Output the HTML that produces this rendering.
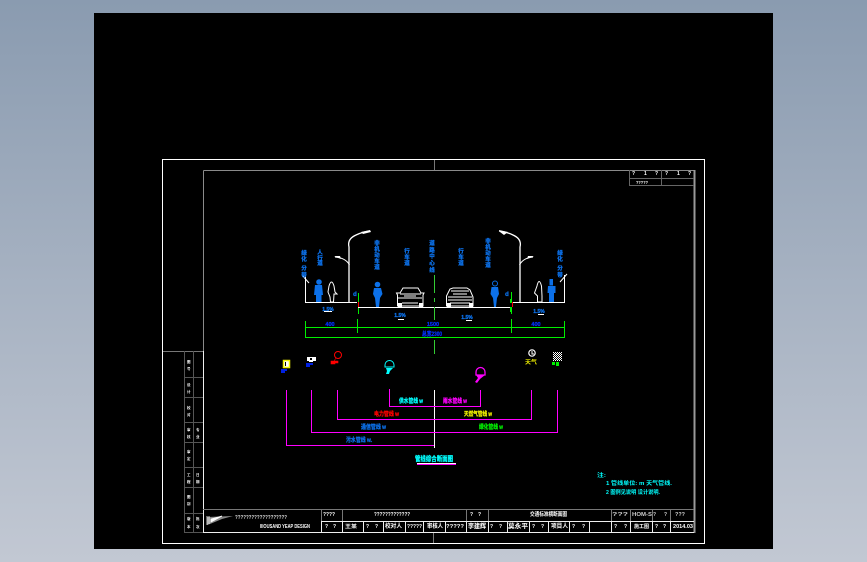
<!DOCTYPE html>
<html lang="zh"><head><meta charset="utf-8"><title>CAD</title>
<style>
html,body{margin:0;padding:0;width:867px;height:562px;overflow:hidden;background:linear-gradient(#8a9bb0,#c2c8d3)}
svg{position:absolute;left:0;top:0;display:block}
text{font-family:"Liberation Sans","Noto Sans CJK SC",sans-serif;font-weight:bold}
.b text,text.b{stroke:currentColor;stroke-width:.3}
</style></head><body>
<svg width="867" height="562" viewBox="0 0 867 562" xmlns="http://www.w3.org/2000/svg">
<rect x="94" y="13" width="679" height="536" fill="#000"/>

<!-- frames -->
<g fill="none" shape-rendering="crispEdges">
<rect x="162.5" y="159.5" width="542" height="384" stroke="#fff"/>
<path d="M203.5 170.5H694.5V509" stroke="#8a8a8a"/>
<path d="M694.5 170V533" stroke="#999" stroke-width="2"/>
<path d="M203.5 170.5V351" stroke="#8a8a8a"/>
<path d="M203.5 351V532.5H694" stroke="#eee"/>
<path d="M434.5 160V170M433.5 533V543M163 351.5H203" stroke="#777"/>
<!-- top right table -->
<path d="M629.5 170V185.5H694M661.5 170V185.5M629.5 178.5H694" stroke="#666"/>
<!-- left strip -->
<path d="M184.5 351V532.5M193.5 351V532.5M184 377.5H203M184 397.5H203M184 422.5H203M184 442.5H203M184 467.5H203M184 487.5H203M184 513.5H203M184 532.5H203" stroke="#555"/>
<!-- title block -->
<path d="M203 509.5H694M321.5 509V521M342.5 509V521M466.5 509V521M488.5 509V521M611.5 509V521M630.5 509V521M652.5 509V521M670.5 509V521" stroke="#777"/>
<path d="M321 521.500H694" stroke="#eee"/>
<path d="M321.500 521V532M342.500 521V532M363.500 521V532M383.500 521V532M405.500 521V532M423.500 521V532M445.500 521V532M466.500 521V532M488.500 521V532M507.500 521V532M529.500 521V532M548.500 521V532M569.500 521V532M589.500 521V532M611.500 521V532M630.500 521V532M652.500 521V532M670.500 521V532" stroke="#eee"/>
</g>

<!-- left strip text -->
<g fill="#fff" font-size="3.500">
<text x="187" y="363">图</text><text x="187" y="370">号</text>
<text x="187" y="386">设</text><text x="187" y="393">计</text>
<text x="187" y="409">校</text><text x="187" y="416">对</text>
<text x="187" y="431">审</text><text x="187" y="438">核</text><text x="196" y="431">专</text><text x="196" y="438">业</text>
<text x="187" y="453">审</text><text x="187" y="460">定</text>
<text x="187" y="476">工</text><text x="187" y="483">程</text><text x="196" y="476">日</text><text x="196" y="483">期</text>
<text x="187" y="498">图</text><text x="187" y="505">别</text>
<text x="187" y="520">版</text><text x="187" y="528">本</text><text x="196" y="520">批</text><text x="196" y="528">次</text>
</g>

<!-- top right table text -->
<g fill="#fff" font-size="5">
<text x="632" y="175">?</text><text x="644" y="175">1</text><text x="655" y="175">?</text><text x="665" y="175">?</text><text x="677" y="175">1</text><text x="688" y="175">?</text>
<text x="636" y="184" font-size="4.500" textLength="12" lengthAdjust="spacingAndGlyphs">?????</text>
</g>

<!-- title block text -->
<g fill="#fff" font-size="5">
<path d="M207 517L233 516L222 519L210 524L207 525Z" fill="#888"/>
<path d="M207 516V525M209 516V524M211 522L222 516L211 519Z" stroke="#fff" fill="#fff" stroke-width=".8"/>
<text x="235" y="519" font-size="5" fill="#ddd" textLength="52" lengthAdjust="spacingAndGlyphs">???????????????????</text>
<text x="260" y="528" font-size="5" textLength="50" lengthAdjust="spacingAndGlyphs">IIIOUSAND YEAP DESIGN</text>
<text x="323" y="516" font-size="5" textLength="12" lengthAdjust="spacingAndGlyphs">????</text>
<text x="374" y="516" font-size="5" textLength="36" lengthAdjust="spacingAndGlyphs">?????????????</text>
<text x="325" y="528">?</text><text x="333" y="528">?</text>
<text x="345" y="528" textLength="12" lengthAdjust="spacingAndGlyphs">王某</text>
<text x="366" y="528">?</text><text x="375" y="528">?</text>
<text x="385" y="528" font-size="6" textLength="17" lengthAdjust="spacingAndGlyphs">校对人</text>
<text x="407" y="528" textLength="15" lengthAdjust="spacingAndGlyphs">?????</text>
<text x="427" y="528" font-size="6" textLength="16" lengthAdjust="spacingAndGlyphs">审核人</text>
<text x="446" y="528" textLength="18" lengthAdjust="spacingAndGlyphs">?????</text>
<text x="468" y="528" font-size="6.500" textLength="18" lengthAdjust="spacingAndGlyphs">李建辉</text>
<text x="470" y="516">?</text><text x="478" y="516">?</text>
<text x="530" y="516" font-size="5.500" textLength="37" lengthAdjust="spacingAndGlyphs">交通标准横断面图</text>
<text x="490" y="528">?</text><text x="499" y="528">?</text>
<text x="508" y="528" font-size="6.500" textLength="20" lengthAdjust="spacingAndGlyphs">莫永平</text>
<text x="532" y="528">?</text><text x="541" y="528">?</text>
<text x="551" y="528" font-size="6" textLength="17" lengthAdjust="spacingAndGlyphs">项目人</text>
<text x="572" y="528">?</text><text x="582" y="528">?</text>
<text x="612" y="516" fill="#ccc" textLength="16" lengthAdjust="spacingAndGlyphs">???</text>
<text x="632" y="516" fill="#ccc" textLength="20" lengthAdjust="spacingAndGlyphs">HOM-S</text>
<text x="653" y="516" fill="#ccc">?</text><text x="664" y="516" fill="#ccc">?</text>
<text x="675" y="516" fill="#ccc" textLength="10" lengthAdjust="spacingAndGlyphs">???</text>
<text x="614" y="528">?</text><text x="624" y="528">?</text>
<text x="634" y="528" font-size="5" textLength="15" lengthAdjust="spacingAndGlyphs">施工图</text>
<text x="655" y="528">?</text><text x="663" y="528">?</text>
<text x="673" y="528" font-size="5.500" font-weight="normal" textLength="20" lengthAdjust="spacingAndGlyphs">2014.03</text>
</g>

<!-- road section -->
<g fill="none" stroke="#fff">
<path d="M305.500 275V302.500H357M358 307.500H512M512 302.500H564.500V275" stroke-width="1" shape-rendering="crispEdges"/>
<path d="M302 275L309 283M567 274L560 282" stroke-width="1"/>
<path d="M349 302V247Q347 239 356 235Q362 232 370 231" stroke-width="1.300"/>
<path d="M349.500 265Q346 258 335 257" stroke-width="1"/>
<path d="M520 302V247Q522 239 513 235Q507 232 499 231" stroke-width="1.300"/>
<path d="M519.500 265Q523 258 533 257" stroke-width="1"/>
</g>
<g fill="#fff">
<path d="M361 232L370 230L371 232L363 234Z"/><path d="M334 256L340 256L341 259Z"/>
<path d="M499 230L508 232L504 235L500 232Z"/><path d="M534 256L528 256L527 259Z"/>
</g>

<!-- cars -->
<g fill="none" stroke="#fff" stroke-width="1">
<path d="M396.500 293L400 293L403 288H418L421 293L424 293L423 295V306H397.500V295Z"/>
<path d="M400 294H421M398 298H422M402 303H418M404 296H416"/>
<path d="M446.500 296L450 289L453 288H467L470 290L473 297V306H446.500Z"/>
<path d="M451 291H469M448 297H472M448 300H472M450 303H470M453 294H467"/>
</g>
<path d="M398 303H402V307H398ZM419 303H423V307H419ZM447 303H451V307H447ZM469 303H473V307H469Z" fill="#fff"/>

<!-- pedestrians -->
<g fill="#0c70e8">
<circle cx="319" cy="282" r="2.800"/><path d="M315 285H322L323 295H321.500V302H316V295H314Z"/>
<circle cx="377.500" cy="284.500" r="2.800"/><path d="M374 288H381L382.500 294L380 298L379 307H376L375 298L373 294Z"/>
<path d="M491.500 287H498L499 294L497 298L496 307H494L493 298L490.500 294Z"/>
<path d="M548 286H555.500V293H554V302H549V293H547.500Z"/><rect x="549.500" y="279" width="3.500" height="6.500"/>
</g>
<circle cx="495" cy="283.500" r="2.500" fill="none" stroke="#0c70e8"/>
<g fill="none" stroke="#fff">
<path d="M329 286Q331.500 278 334 286L335 292L337 294H334L333.500 302H330.500L330 297L328 292Z"/>
<path d="M537 286Q539 277 541.500 286L542 296V302H537.500V296L534.500 293Z"/>
</g>

<!-- vertical labels -->
<g fill="#0c70e8" color="#0c70e8" font-size="5.500" text-anchor="middle" class="b">
<text x="304"><tspan x="304" y="255">绿</tspan><tspan x="304" y="261">化</tspan><tspan x="304" y="270">分</tspan><tspan x="304" y="277">带</tspan></text>
<text x="320"><tspan x="320" y="254">人</tspan><tspan x="320" y="260">行</tspan><tspan x="320" y="265">道</tspan></text>
<text x="377"><tspan x="377" y="245">非</tspan><tspan x="377" y="251">机</tspan><tspan x="377" y="257">动</tspan><tspan x="377" y="263">车</tspan><tspan x="377" y="269">道</tspan></text>
<text x="407"><tspan x="407" y="253">行</tspan><tspan x="407" y="259">车</tspan><tspan x="407" y="265">道</tspan></text>
<text x="432"><tspan x="432" y="245">道</tspan><tspan x="432" y="252">路</tspan><tspan x="432" y="258">中</tspan><tspan x="432" y="265">心</tspan><tspan x="432" y="272">线</tspan></text>
<text x="461"><tspan x="461" y="253">行</tspan><tspan x="461" y="259">车</tspan><tspan x="461" y="265">道</tspan></text>
<text x="488"><tspan x="488" y="243">非</tspan><tspan x="488" y="249">机</tspan><tspan x="488" y="255">动</tspan><tspan x="488" y="261">车</tspan><tspan x="488" y="267">道</tspan></text>
<text x="560"><tspan x="560" y="255">绿</tspan><tspan x="560" y="261">化</tspan><tspan x="560" y="270">分</tspan><tspan x="560" y="277">带</tspan></text>
</g>

<!-- slope/dim labels -->
<g font-size="5" fill="#0c70e8" color="#0c70e8" text-anchor="middle" class="b">
<text x="328" y="311">1.5%</text><text x="400" y="317">1.5%</text><text x="467" y="319">1.5%</text><text x="539" y="313">1.5%</text>
<text x="355" y="296" font-size="6">d</text><text x="507" y="296" font-size="6">d</text>
</g>
<g font-size="5.500" fill="#0030f0" color="#0030f0" text-anchor="middle" class="b">
<text x="330" y="326">400</text>
<text x="433" y="326">1500</text>
<text x="536" y="326">400</text>
<text x="432" y="336" font-size="6" textLength="20" lengthAdjust="spacingAndGlyphs">总宽2300</text>
</g>
<g fill="none" stroke="#fff" shape-rendering="crispEdges">
<path d="M324 311.500H332M398 319.500H404M466 320.500H472M538 314.500H544"/>
</g>

<!-- green dims -->
<g fill="none" stroke="#0e0" shape-rendering="crispEdges">
<path d="M305.500 321V333M357.500 319V333M511.500 319V333M564.500 321V333M305 327.500H565"/>
<path d="M305.500 331V338M564.500 331V338M305 337.500H565"/>
<path d="M358.500 293V303M358.500 308V314M511.500 292V303M511.500 308V314" />
</g>
<path d="M358 302H359V307H358Z M512 302H513V307H512Z" fill="#f00"/>
<path d="M510 299H512V303H510ZM510 307H512V312H510Z" fill="#0e0"/>
<path d="M434.500 275V293M434.500 298V302M434.500 307V320M434.500 340V354" stroke="#3c3" fill="none" shape-rendering="crispEdges"/>
<path d="M434.500 390V448" stroke="#fff" fill="none" shape-rendering="crispEdges"/>

<!-- brackets -->
<g fill="none" stroke="#f0f" shape-rendering="crispEdges">
<path d="M286.500 390V445.500H434"/>
<path d="M311.500 390V432.500H557.500V390"/>
<path d="M337.500 390V419.500H531.500V390"/>
<path d="M389.500 389V406.500H480.500V390"/>
<path d="M417 464.500H456"/>
</g>
<path d="M417 463.500H456" stroke="#fff" shape-rendering="crispEdges"/>

<!-- symbols -->
<rect x="283.500" y="360.500" width="6" height="7" fill="#fff" stroke="#ee0" stroke-width="1.500"/>
<path d="M285.500 362V366" stroke="#000"/>
<path d="M281 369H287V371H285V373H281Z" fill="#0020e0"/>
<path d="M307 357H316V361H313V362H309V361H307Z" fill="#fff"/><path d="M310 358H312V360H310Z" fill="#000"/>
<path d="M306 363H313V365H310V367H306Z" fill="#0020e0"/>
<circle cx="338" cy="355" r="3.500" fill="none" stroke="#f00"/>
<path d="M336 358L334 361M331 361H338V363H335V364H331Z" fill="#f00" stroke="#f00" stroke-width=".6"/>
<path d="M385 365A4.500 4.500 0 0 1 394 365V367H385Z" fill="none" stroke="#0ff"/>
<path d="M386 368H393L390 371L389 374H386L387 371Z" fill="#0ff"/>
<path d="M476 372A4.500 4.500 0 0 1 485 372V375H476Z" fill="none" stroke="#f0f" stroke-width="1.300"/>
<path d="M476 375H485L480 379L477 383L475 382L478 378Z" fill="#f0f"/>
<circle cx="532" cy="353" r="3.200" fill="none" stroke="#fff" stroke-width="1.200"/>
<path d="M532 351V354H534" stroke="#fff" fill="none"/>
<text x="525" y="364" font-size="5.500" fill="#ee0" textLength="12" lengthAdjust="spacingAndGlyphs">天气</text>
<defs><pattern id="c" width="2" height="2" patternUnits="userSpaceOnUse"><rect width="2" height="2" fill="#fff"/><rect width="1" height="1" fill="#000"/><rect x="1" y="1" width="1" height="1" fill="#000"/></pattern></defs>
<rect x="553" y="352" width="9" height="9" fill="url(#c)"/>
<path d="M552 362H555V365H552ZM556 362H559V366H556Z" fill="#0e0"/>

<!-- coloured labels -->
<g font-size="6" class="b">
<text x="399" y="403" fill="#0ff" color="#0ff" textLength="24" lengthAdjust="spacingAndGlyphs">供水管线 w</text>
<text x="443" y="403" fill="#f0f" color="#f0f" textLength="24" lengthAdjust="spacingAndGlyphs">雨水管线 w</text>
<text x="374" y="416" fill="#f00" color="#f00" textLength="25" lengthAdjust="spacingAndGlyphs">电力管线 w</text>
<text x="464" y="416" fill="#ee0" color="#ee0" textLength="28" lengthAdjust="spacingAndGlyphs">天然气管线 w</text>
<text x="361" y="429" fill="#0c70e8" color="#0c70e8" textLength="25" lengthAdjust="spacingAndGlyphs">通信管线 w</text>
<text x="479" y="429" fill="#0e0" color="#0e0" textLength="24" lengthAdjust="spacingAndGlyphs">绿化管线 w</text>
<text x="346" y="442" fill="#0c70e8" color="#0c70e8" textLength="26" lengthAdjust="spacingAndGlyphs">污水管线 w.</text>
<text x="415" y="461" fill="#0ff" color="#0ff" font-size="7" textLength="38" lengthAdjust="spacingAndGlyphs">管线综合断面图</text>
</g>

<!-- notes -->
<g fill="#0ff" font-size="5.500">
<text x="597" y="477" textLength="9" lengthAdjust="spacingAndGlyphs">注:</text>
<text x="606" y="485" textLength="66" lengthAdjust="spacingAndGlyphs">1 管线单位: m 天气管线.</text>
<text x="606" y="494" textLength="54" lengthAdjust="spacingAndGlyphs">2 图例见说明 设计说明.</text>
</g>
</svg>
</body></html>
